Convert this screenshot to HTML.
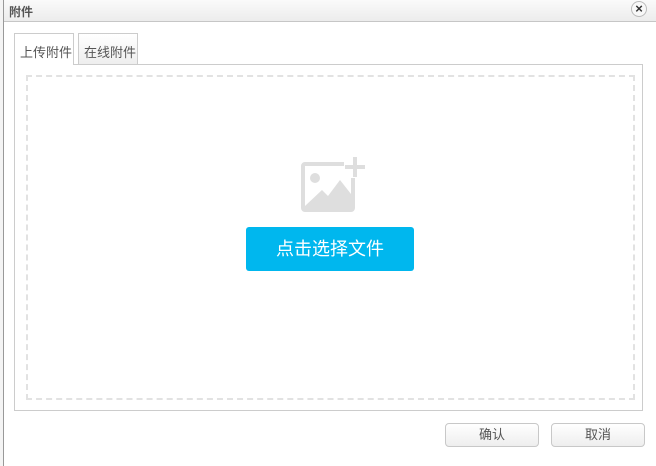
<!DOCTYPE html>
<html><head><meta charset="utf-8"><style>
*{margin:0;padding:0;box-sizing:border-box}
body{width:656px;height:466px;overflow:hidden;background:#fff;position:relative;font-family:"Liberation Sans","Noto Sans CJK SC",sans-serif;font-size:12px;color:#333}
.abs{position:absolute}
</style></head><body>
<div class="abs" style="left:0;top:0;width:4px;height:466px;background:#f4f4f4;border-right:1px solid #999"></div>
<div class="abs" style="left:4px;top:0;width:652px;height:22px;background:linear-gradient(#fafafa,#ececec);border-bottom:1px solid #c6c6c6"></div>
<div class="abs" style="left:9px;top:3px;font-size:12px;font-weight:bold;color:#555">附件</div>
<div class="abs" style="left:631px;top:1px;width:16px;height:16px;border-radius:50%;border:1px solid #bbb;background:#f8f8f8;text-align:center;line-height:13px;font-size:13px;font-weight:bold;color:#333">×</div>
<div class="abs" style="left:14px;top:64px;width:629px;height:347px;border:1px solid #ccc"></div>
<div class="abs" style="left:14px;top:33px;width:60px;height:32px;border:1px solid #ccc;border-bottom:none;background:#fff;font-size:13px;color:#555;padding:8px 0 0 5px">上传附件</div>
<div class="abs" style="left:78px;top:33px;width:60px;height:31px;border:1px solid #ccc;border-bottom:none;background:linear-gradient(#fff,#eee);font-size:13px;color:#555;padding:8px 0 0 5px">在线附件</div>
<div class="abs" style="left:26px;top:75px;width:609px;height:325px;border:2px dashed #e2e2e2"></div>
<svg class="abs" style="left:300px;top:156px" width="66" height="58" viewBox="0 0 66 58">
<path d="M44 6H5a4 4 0 0 0-4 4v42a4 4 0 0 0 4 4h46a4 4 0 0 0 4-4V22h-4v16 L40 24 28 40 22 34 5 50V10h39z" fill="#dedede"/>
<circle cx="15" cy="22" r="5" fill="#dedede"/>
<path d="M53 1h4v8h8v4h-8v8h-4v-8h-8v-4h8z" fill="#dedede"/>
</svg>
<div class="abs" style="left:246px;top:227px;width:168px;height:44px;background:#00b7ee;border-radius:3px;color:#fff;font-size:18px;text-align:center;line-height:44px">点击选择文件</div>
<div class="abs" style="left:445px;top:423px;width:94px;height:24px;border:1px solid #c8c8c8;border-radius:4px;background:linear-gradient(#fff,#eee);text-align:center;line-height:22px;font-size:13px;color:#555">确认</div>
<div class="abs" style="left:551px;top:423px;width:94px;height:24px;border:1px solid #c8c8c8;border-radius:4px;background:linear-gradient(#fff,#eee);text-align:center;line-height:22px;font-size:13px;color:#555">取消</div>
</body></html>
